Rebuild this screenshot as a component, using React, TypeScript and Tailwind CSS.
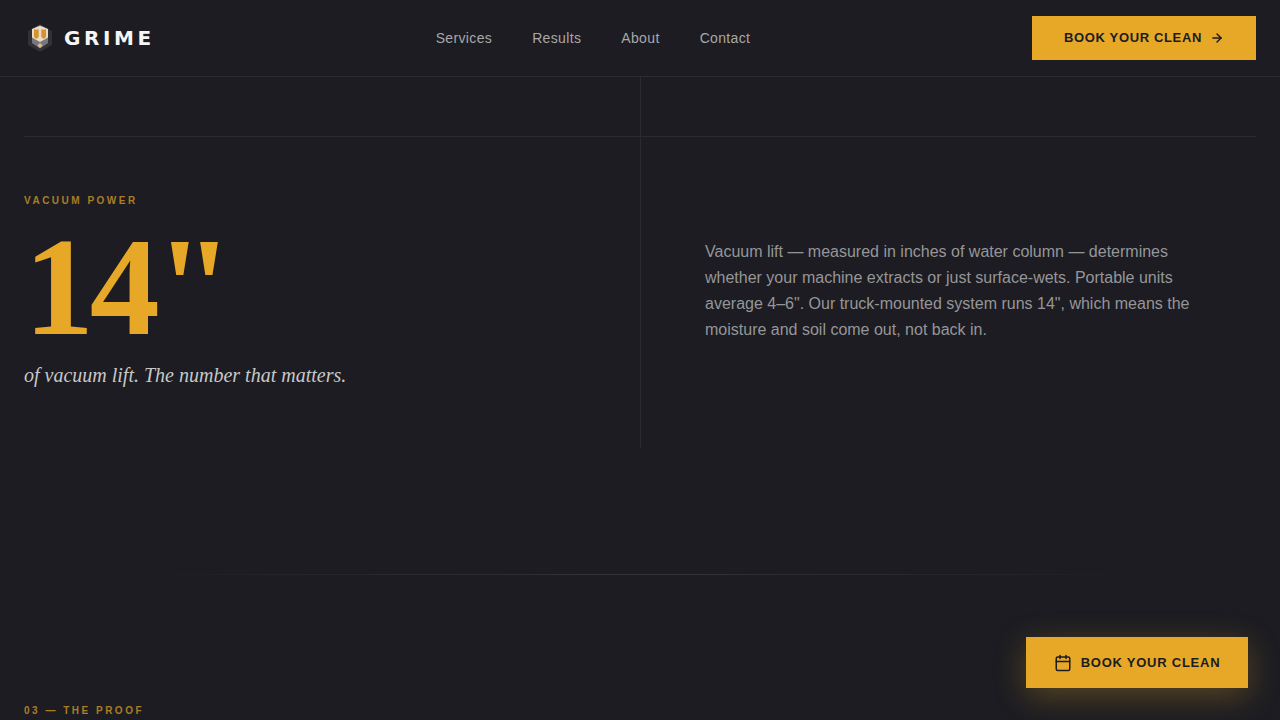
import { ArrowRight, Calendar } from "lucide-react";

function Logo() {
  return (
    <svg width="26" height="30" viewBox="0 0 26 30" className="shrink-0 blur-[0.3px]">
      <path d="M13 1 L25 8 V22 L13 29 L1 22 V8 Z" fill="#303035" />
      <path d="M13 2.5 L21 6 V15 L13 21 L5 15 V6 Z" fill="#e6dcc8" />
      <path d="M7 6.5 H11.7 V14 L9.5 16 L7 14 Z" fill="#d9902f" />
      <path d="M14.3 6.5 H19 V14 L16.5 16 L14.3 14 Z" fill="#d9902f" />
      <path d="M5 14.5 L13 19 L21 14.5 V20 L13 25.5 L5 20 Z" fill="#77777c" />
      <path d="M13 20 L15.5 22.5 L13 25 L10.5 22.5 Z" fill="#d8bd8a" />
    </svg>
  );
}

export default function App() {
  return (
    <div className="relative h-[720px] w-[1280px] overflow-hidden bg-[#1c1c22] font-['Liberation_Sans',Arial,sans-serif]">
      <header className="flex h-[77px] items-center justify-between border-b border-[#2a2a30] px-6">
        <div className="flex w-[130px] items-center gap-[11px] pl-[3px]">
          <Logo />
          <span className="font-['DejaVu_Sans',sans-serif] text-[20px] font-bold tracking-[3.6px] text-[#f5f5f5]">GRIME</span>
        </div>
        <nav className="flex items-center gap-10 text-[14px] tracking-[0.35px] text-[#a8a8a8]">
          <span>Services</span>
          <span>Results</span>
          <span>About</span>
          <span>Contact</span>
        </nav>
        <button className="flex h-11 w-[224px] items-center justify-center gap-2 bg-[#e6a826] text-[13px] font-bold tracking-[0.65px] text-[#1c1c22]">
          BOOK YOUR CLEAN
          <ArrowRight size={14} strokeWidth={2.5} />
        </button>
      </header>

      <section className="grid h-[371px] grid-cols-2 px-6">
        <div className="flex flex-col">
          <div className="h-[60px] shrink-0 border-b border-[#2a2a30]" />
          <div className="pt-[56px]">
            <p className="text-[10px] font-bold tracking-[2.5px] text-[#ab7e25]">VACUUM POWER</p>
            <p className="mt-[9px] font-['Liberation_Serif',serif] text-[140px] font-bold leading-[1] tracking-[-4.2px] text-[#e6a826]">14"</p>
            <p className="mt-[3px] font-['Liberation_Serif',serif] text-[20px] italic text-[#c8c8c8]">of vacuum lift. The number that matters.</p>
          </div>
        </div>
        <div className="flex flex-col border-l border-[#2a2a30]">
          <div className="h-[60px] shrink-0 border-b border-[#2a2a30]" />
          <p className="box-content w-[500px] pl-16 pt-[102px] text-[16px] leading-[26px] text-[#969699]">
            Vacuum lift — measured in inches of water column — determines whether your machine extracts or just surface-wets. Portable units average 4–6". Our truck-mounted system runs 14", which means the moisture and soil come out, not back in.
          </p>
        </div>
      </section>

      <div className="mx-auto mt-[126px] h-px w-[1024px] bg-gradient-to-r from-transparent via-[#33333a] to-transparent" />

      <p className="mt-[128px] px-6 text-[10px] font-bold tracking-[2.5px] text-[#ab7e25]">03 — THE PROOF</p>

      <button className="absolute bottom-[32px] right-[32px] flex h-[51px] w-[222px] items-center justify-center gap-[9px] bg-[#e6a826] text-[13px] font-bold tracking-[0.75px] text-[#1c1c22] shadow-[0_8px_32px_rgba(232,168,38,0.3)]">
        <Calendar size={18} strokeWidth={2} />
        BOOK YOUR CLEAN
      </button>
    </div>
  );
}
